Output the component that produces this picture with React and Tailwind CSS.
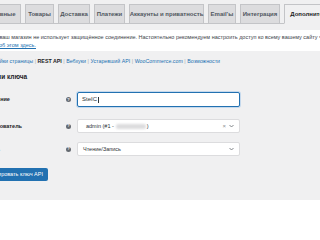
import React from 'react';

const tabs = [
    { label: 'Основные', w: 'w-[42px]' },
    { label: 'Товары', w: 'w-[29px]' },
    { label: 'Доставка', w: 'w-[32px]' },
    { label: 'Платежи', w: 'w-[31px]' },
    { label: 'Аккаунты и приватность', w: 'w-[75px]' },
    { label: 'Email\u2019ы', w: 'w-[28px]' },
    { label: 'Интеграция', w: 'w-[40px]' },
    { label: 'Дополнительно', w: 'w-[60px]', active: true },
];

const subLinks = ['Настройки страницы', 'REST API', 'Вебхуки', 'Устаревший API', 'WooCommerce.com', 'Возможности'];

function HelpTip() {
    return (
        <span className="flex h-[5px] w-[5px] items-center justify-center rounded-full bg-[#646970] text-[4px] font-bold leading-none text-white">
            ?
        </span>
    );
}

function Chevron() {
    return (
        <svg width="5" height="4" viewBox="0 0 10 8" className="text-[#646970]">
            <path d="M1 2 L5 6 L9 2" fill="none" stroke="currentColor" strokeWidth="1.6" />
        </svg>
    );
}

function FieldRow({ label, children, className }) {
    return (
        <div className={`flex items-center ${className}`}>
            <div className="flex w-[89px] items-center justify-between pr-[1px]">
                <span className="text-[5.5px] font-semibold text-[#1d2327]">{label}</span>
                <HelpTip />
            </div>
            <div className="ml-[5px] w-[163px]">{children}</div>
        </div>
    );
}

export default function App() {
    return (
        <div
            className="h-[200px] w-[320px] overflow-hidden bg-[#f0f0f1] text-[#3c434a]"
            style={{ fontFamily: '"Liberation Sans", Arial, sans-serif' }}
        >
            {/* settings tabs */}
            <div className="pt-[4px]">
                <div className="flex h-[20px] gap-[4px] border-b border-[#c3c4c7] -ml-[21px]">
                    {tabs.map((t) => (
                        <div
                            key={t.label}
                            className={`flex h-[20px] shrink-0 items-center justify-center whitespace-nowrap border border-[#c3c4c7] text-[6px] font-semibold ${t.w} ${
                                t.active
                                    ? 'border-b-[#f0f0f1] bg-[#f0f0f1] text-[#1d2327]'
                                    : 'bg-[#dcdcde] text-[#50575e]'
                            }`}
                        >
                            {t.label}
                        </div>
                    ))}
                </div>
            </div>

            {/* https warning */}
            <div className="mt-[6px] bg-white pb-[2px] pt-[3px] -ml-[30px] pl-[4px] border-l-[3px] border-[#dba617]">
                <p className="whitespace-nowrap text-[5.5px] leading-[8px]">
                    Похоже, ваш магазин не использует защищённое соединение. Настоятельно рекомендуем настроить доступ ко всему вашему сайту через HTTPS
                    <br />
                    <a className="text-[#2271b1] underline">Узнайте об этом здесь.</a>
                </p>
            </div>

            <div className="-ml-[17px]">
                {/* sub navigation */}
                <div className="mt-[7px] flex h-[8px] items-center gap-[1.5px] whitespace-nowrap text-[5.3px] -ml-[1px]">
                    {subLinks.map((l, i) => (
                        <React.Fragment key={l}>
                            {i > 0 && <span className="text-[#a7aaad]">|</span>}
                            <a className={l === 'REST API' ? 'font-bold text-[#1d2327]' : 'text-[#2271b1]'}>{l}</a>
                        </React.Fragment>
                    ))}
                </div>

                <h2 className="mt-[6px] h-[10px] text-[6.5px] font-semibold leading-[10px] text-[#1d2327] -ml-[1px]">Детали ключа</h2>

                <FieldRow label="Описание" className="mt-[10px]">
                    <div className="flex h-[15px] items-center rounded-[2px] border border-[#2271b1] bg-white px-[4px] shadow-[0_0_0_1px_#c5d9ed]">
                        <span className="text-[6px] text-[#2c3338]">SteIC</span>
                        <span className="ml-[0.5px] h-[6px] w-[1px] bg-[#2c3338]" />
                    </div>
                </FieldRow>

                <FieldRow label="Пользователь" className="mt-[12px]">
                    <div className="flex h-[14px] items-center rounded-[2px] border border-[#dcdcde] bg-white pl-[8px] pr-[5px]">
                        <span className="text-[5.5px] text-[#2c3338]">admin (#1 -</span>
                        <span className="ml-[2px] h-[5px] w-[30px] rounded-[2px] bg-[#dcdcde] blur-[1px]" />
                        <span className="ml-[1px] text-[5.5px] text-[#2c3338]">)</span>
                        <span className="ml-auto text-[6px] leading-none text-[#8c8f94]">×</span>
                        <span className="ml-[3px] flex"><Chevron /></span>
                    </div>
                </FieldRow>

                <FieldRow label="Права" className="mt-[9px]">
                    <div className="flex h-[14px] items-center rounded-[2px] border border-[#dcdcde] bg-white pl-[5px] pr-[5px]">
                        <span className="text-[5.5px] text-[#2c3338]">Чтение/Запись</span>
                        <span className="ml-auto flex"><Chevron /></span>
                    </div>
                </FieldRow>

                <button className="mt-[12px] -ml-[8px] flex h-[13px] items-center rounded-[2px] bg-[#2271b1] px-[5px] text-[5.5px] text-white">
                    Сгенерировать ключ API
                </button>
            </div>
        </div>
    );
}
